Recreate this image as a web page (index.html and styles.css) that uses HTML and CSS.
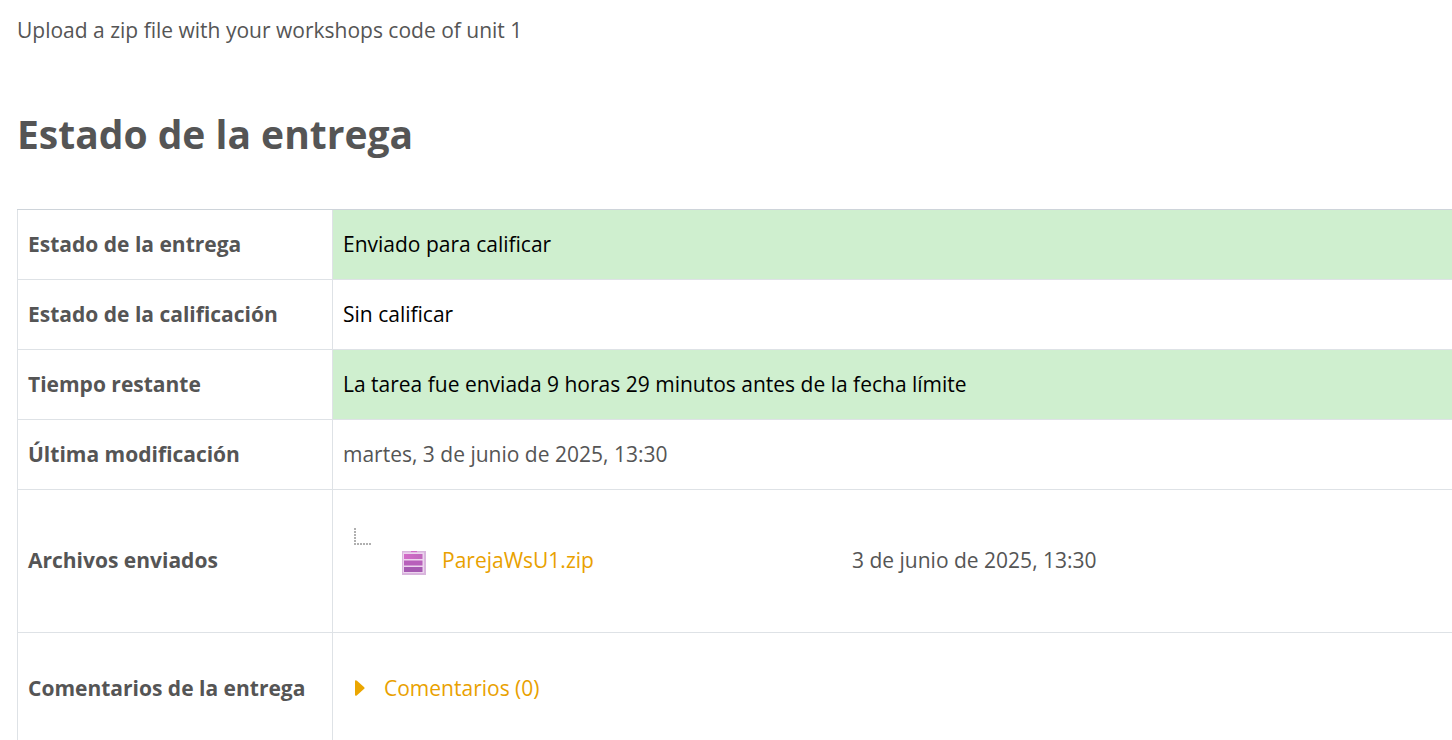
FILE: index.html
```html
<!DOCTYPE html>
<html lang="es">
<head>
<meta charset="utf-8">
<title>Estado de la entrega</title>
<link rel="stylesheet" href="styles.css">
</head>
<body>
<main class="page">
  <p class="intro">Upload a zip file with your workshops code of unit 1</p>
  <h3 class="title">Estado de la entrega</h3>
  <table class="status">
    <tbody>
      <tr><th scope="row">Estado de la entrega</th><td class="good">Enviado para calificar</td></tr>
      <tr><th scope="row">Estado de la calificación</th><td class="dark">Sin calificar</td></tr>
      <tr><th scope="row">Tiempo restante</th><td class="good">La tarea fue enviada 9 horas 29 minutos antes de la fecha límite</td></tr>
      <tr><th scope="row">Última modificación</th><td>martes, 3 de junio de 2025, 13:30</td></tr>
      <tr class="files-row"><th scope="row">Archivos enviados</th><td>
        <div class="file">
          <svg class="branch" width="18" height="18" viewBox="0 0 18 18" aria-hidden="true"><path d="M1 0V15M0 16H18" fill="none" stroke="#b0b0b0" stroke-width="2" stroke-dasharray="2 1"/></svg>
          <svg class="archive" width="24" height="24" viewBox="0 0 24 24" aria-hidden="true">
            <defs><linearGradient id="drawer" x1="0" x2="1"><stop offset="0" stop-color="#d36bc8"/><stop offset="1" stop-color="#c068bc"/></linearGradient></defs>
            <path fill="#d9b5dd" d="M0 0h24v24H0z"/>
            <path fill="#d36bc8" d="M9 0h6v1.2H9z"/>
            <path fill="#ecd4ee" d="M1 1.5h21V22H1z"/>
            <path fill="url(#drawer)" d="M2 3h18.500v5H2z"/>
            <path fill="#b860bb" d="M2 9.500h18.500v5H2z"/>
            <path fill="#a65ab2" d="M2 16h18.500v5H2z"/>
          </svg>
          <a class="file-name" href="#">ParejaWsU1.zip</a>
          <span class="file-date">3 de junio de 2025, 13:30</span>
        </div>
      </td></tr>
      <tr class="comments-row"><th scope="row">Comentarios de la entrega</th><td>
        <a class="comments" href="#"><svg width="10" height="16" viewBox="0 0 10 16" aria-hidden="true"><path fill="#eba600" d="M0 1.500Q0-.5 2 .8L9.200 7.200Q10 8 9.200 8.800L2 15.200Q0 16.500 0 14.500Z"/></svg>Comentarios (0)</a>
      </td></tr>
    </tbody>
  </table>
</main>
</body>
</html>
```
FILE: styles.css
```css
body { margin: 0; background: #fff; color: #555; font: 21px/32px "Open Sans", sans-serif; }
.page { padding: 14px 0 0 17px; overflow: hidden; }
.intro { margin: 0; }
.title { margin: 62px 0 50px; font-size: 39px; line-height: 51px; font-weight: 700; }
.status { width: 100%; border-collapse: collapse; }
.status th, .status td { height: 70px; box-sizing: border-box; padding: 0 10px 2px; border: 1px solid #dee2e6; border-right: 0; text-align: left; }
.status tr:first-child th, .status tr:first-child td { border-top-color: #ced4da; }
.status th { width: 315px; font-weight: 700; white-space: nowrap; }
.status .good { background: #cfefcf; color: #000; }
.status .dark { color: #000; }
.status .files-row td { height: 143px; }
.status .comments-row td { height: 112px; }
a { color: #e9a100; text-decoration: none; }
.file { display: flex; align-items: center; padding-left: 11px; }
.branch { margin: 0 30px 46px 0; }
.archive { margin: 6px 16px 0 0; }
.file-name { width: 410px; }
.comments { display: flex; align-items: center; gap: 19px; padding-left: 12px; }
```
